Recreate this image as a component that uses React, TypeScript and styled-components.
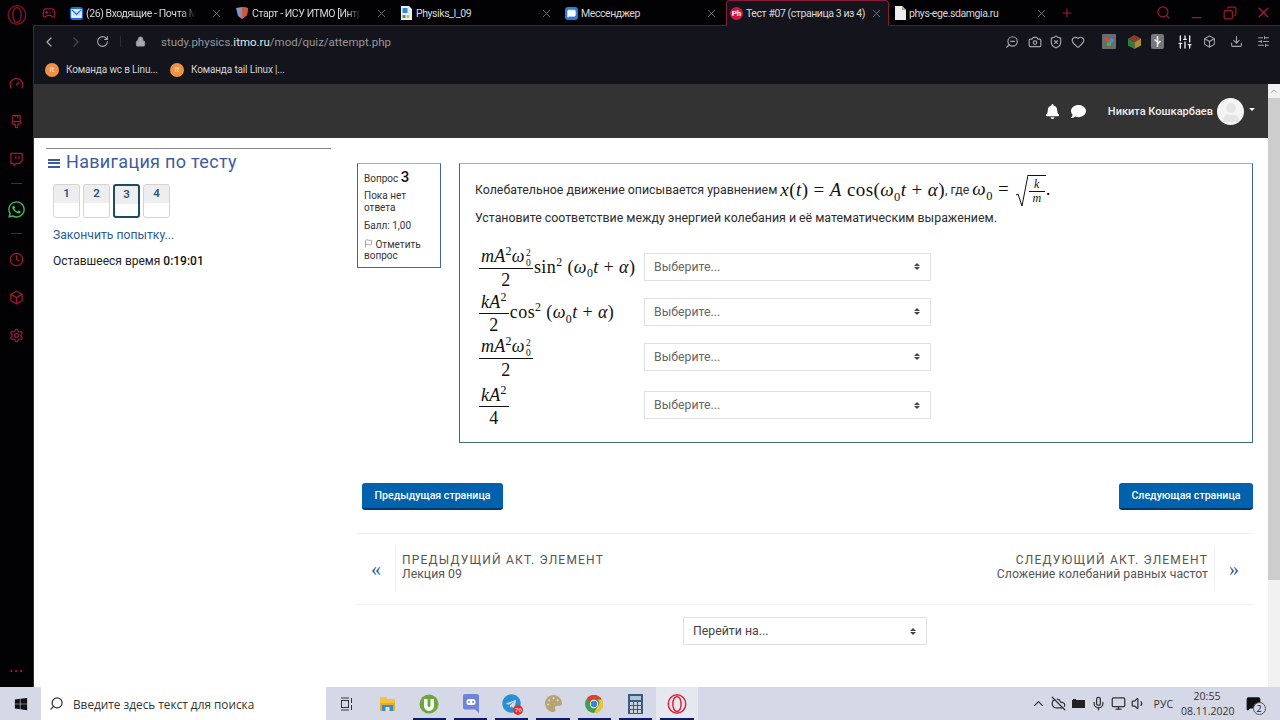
import React from 'react'
import styled, { createGlobalStyle } from 'styled-components'
import {
  Box, Camera, ChevronLeft, ChevronRight, ChevronUp, Clock, CloudOff, Copy, Download, Flag, Gamepad2, Gauge, Heart,
  Lock, Mic, Minus, Monitor, PaintbrushVertical, Plus, RotateCw, Search, Settings, ShieldX, SlidersHorizontal,
  SlidersVertical, Twitch, Volume1, X, ZoomOut, MessageSquare, User,
} from 'lucide-react'
import { FaBell, FaComment, FaTelegram, FaWhatsapp, FaWindows, FaPalette } from 'react-icons/fa'

const GlobalStyle = createGlobalStyle`
    html, body {
        margin: 0;
        padding: 0;
        background: #000;
        overflow: hidden;
    }
    * {
        box-sizing: border-box;
    }
`

const RED = '#a3173a'
const PAGE_FONT = `Roboto, "Noto Sans", sans-serif`
const CHROME_FONT = `Roboto, "Noto Sans", sans-serif`
const TASK_FONT = `"Open Sans", "Noto Sans", sans-serif`
const MATH_FONT = `"Liberation Serif", "DejaVu Serif", serif`

const Screen = styled.div`
    width: 1280px;
    height: 720px;
    display: flex;
    flex-direction: column;
    overflow: hidden;
`
const Desktop = styled.div`
    flex: 1;
    min-height: 0;
    display: flex;
    background: #020204;
`
const Rail = styled.nav`
    width: 33px;
    display: flex;
    flex-direction: column;
    align-items: center;
    color: ${RED};
    padding-bottom: 16px;
`
const RailLogo = styled.div`
    height: 30px;
    margin-bottom: 34px;
    display: flex;
    align-items: center;
    justify-content: center;
`
const RailSlot = styled.div`
    height: 38px;
    display: flex;
    align-items: center;
    justify-content: center;
`
const RailDash = styled.div`
    width: 11px;
    height: 1px;
    margin: 5px 0 6px;
    background: #7a1330;
`
const RailDots = styled.div`
    margin-top: auto;
    color: #d0143f;
    font: bold 13px/6px ${CHROME_FONT};
    letter-spacing: 1px;
`
const Browser = styled.div`
    flex: 1;
    min-width: 0;
    display: flex;
    flex-direction: column;
`
const TabStrip = styled.div`
    height: 26px;
    display: flex;
    align-items: stretch;
    color: #ddd;
    font: 10.5px/25px ${CHROME_FONT};
    letter-spacing: -0.42px;
    border-bottom: 1px solid #6e1129;
`
const PinnedSlot = styled.div`
    width: 31px;
    display: flex;
    align-items: center;
    justify-content: center;
    color: ${RED};
`
const Tab = styled.div<{ $active?: boolean }>`
    width: ${p => (p.$active ? '163px' : '165px')};
    margin-left: ${p => (p.$active ? '2px' : '0')};
    flex: none;
    display: flex;
    align-items: center;
    padding: 0 5px 0 ${p => (p.$active ? '3px' : '5px')};
    gap: 3px;
    height: 26px;
    background: ${p => (p.$active ? '#14151c' : 'transparent')};
    border: 1px solid ${p => (p.$active ? '#8a1a36' : 'transparent')};
    border-bottom: 1px solid ${p => (p.$active ? '#14151c' : 'transparent')};
    border-radius: ${p => (p.$active ? '4px 4px 0 0' : '0')};
`
const TabTitle = styled.span<{ $fade?: boolean }>`
    flex: 1;
    min-width: 0;
    white-space: nowrap;
    color: #d8d8d8;
    ${p => p.$fade && 'mask-image: linear-gradient(to right, #000 82%, transparent 94%);'}
`
const TabClose = styled(X)`
    flex: none;
    width: 13px;
    height: 13px;
    margin-left: 4px;
    color: #8b8b8b;
    stroke-width: 1.4;
`
const Favicon = styled.span<{ $bg: string; $round?: boolean }>`
    flex: none;
    width: 13px;
    height: 13px;
    display: inline-flex;
    align-items: center;
    justify-content: center;
    background: ${p => p.$bg};
    border-radius: ${p => (p.$round ? '50%' : '3px')};
    color: #fff;
    letter-spacing: 0;
    font: bold 8px/13px ${CHROME_FONT};
`
const NewTab = styled.div`
    width: 26px;
    display: flex;
    align-items: center;
    justify-content: center;
    color: ${RED};
`
const WindowButtons = styled.div`
    margin-left: auto;
    display: flex;
    align-items: center;
    color: ${RED};
    gap: 18.5px;
    padding-right: 8px;
`
const MinimizeIcon = styled(Minus)`
    margin-top: 9px;
`
const RestoreIcon = styled(Copy)`
    transform: scaleX(-1);
`
const WindowBody = styled.div`
    flex: 1;
    min-height: 0;
    display: flex;
    flex-direction: column;
    border-left: 1px solid #6e1129;
`
const Toolbar = styled.div`
    height: 31px;
    display: flex;
    align-items: center;
    background: #14151c;
    color: #9a9a9e;
    padding-left: 1px;
`
const NavButton = styled.div<{ $dim?: boolean }>`
    width: 27px;
    display: flex;
    justify-content: center;
    color: ${p => (p.$dim ? '#44454b' : '#a5a5a8')};
`
const ToolbarDivider = styled.span`
    width: 1px;
    height: 11px;
    margin: 0 14px 0 4px;
    background: #2c2d33;
`
const Url = styled.div`
    margin-left: 15px;
    font: 11.5px ${CHROME_FONT};
    color: #96969a;
    b {
        font-weight: 400;
        color: #e6e6e6;
    }
`
const ToolIcons = styled.div`
    margin-left: auto;
    display: flex;
    align-items: center;
    padding-right: 3px;
    color: #a4a4a8;
`
const ToolIcon = styled.div<{ $w: number; $light?: boolean }>`
    width: ${p => p.$w}px;
    display: flex;
    justify-content: center;
    color: ${p => (p.$light ? '#eee' : 'inherit')};
`
const MirroredZoom = styled(ZoomOut)`
    transform: scaleX(-1);
`
const Bookmarks = styled.div`
    height: 27px;
    display: flex;
    align-items: center;
    background: #14151c;
    padding: 0 0 2px 11px;
    font: 10px ${CHROME_FONT};
    letter-spacing: -0.15px;
    color: #d4d4d4;
`
const Bookmark = styled.div<{ $w: number }>`
    width: ${p => p.$w}px;
    display: flex;
    align-items: center;
    gap: 7px;
    white-space: nowrap;
`
const Lt = styled.span`
    width: 14px;
    height: 14px;
    border-radius: 50%;
    background: #ef9145;
    color: #fde7d3;
    font: 8px/14px ${CHROME_FONT};
    text-align: center;
`
const Viewport = styled.div`
    flex: 1;
    min-height: 0;
    display: flex;
    background: #fff;
`
const Page = styled.div`
    flex: 1;
    min-width: 0;
    display: flex;
    flex-direction: column;
    font-family: ${PAGE_FONT};
`
const Header = styled.header`
    height: 54px;
    background: #333;
    display: flex;
    align-items: center;
    justify-content: flex-end;
    padding-right: 13.5px;
    color: #fff;
`
const HeaderIcon = styled.div`
    display: flex;
    margin-right: 11px;
`
const UserName = styled.span`
    margin-left: 10.5px;
    font-size: 11px;
    font-weight: 500;
    color: #eee;
`
const Avatar = styled.span`
    width: 27px;
    height: 27px;
    margin: 0 4.5px 0 4px;
    border-radius: 50%;
    background: #f4f4f4;
    color: #e4e4e4;
    display: flex;
    align-items: flex-end;
    justify-content: center;
    overflow: hidden;
`
const Caret = styled.span`
    width: 0;
    height: 0;
    margin-top: -3px;
    border-left: 3.5px solid transparent;
    border-right: 3.5px solid transparent;
    border-top: 3.5px solid #fff;
`
const Columns = styled.div`
    flex: 1;
    display: flex;
    min-height: 0;
`
const Sidebar = styled.aside`
    width: 323px;
    flex: none;
    padding: 10px 26px 0 12px;
`
const SideCard = styled.div`
    border-top: 1px solid #8a8a8a;
    padding: 3px 0 0 2px;
`
const SideTitle = styled.h2`
    margin: 0;
    display: flex;
    align-items: center;
    gap: 6px;
    font-size: 18px;
    font-weight: 400;
    letter-spacing: 0.3px;
    line-height: 20px;
    color: #3f5a9f;
`
const SideBurger = styled.span`
    width: 12px;
    height: 9px;
    margin-top: 2px;
    border-top: 2px solid #3f5a9f;
    border-bottom: 2px solid #3f5a9f;
    position: relative;
    &::after {
        content: '';
        position: absolute;
        left: 0;
        right: 0;
        top: 1.5px;
        height: 2px;
        background: #3f5a9f;
    }
`
const QuestionLinks = styled.div`
    display: flex;
    gap: 3px;
    margin: 12px 0 0 5px;
`
const QuestionLink = styled.div<{ $current?: boolean }>`
    width: 27px;
    height: 34px;
    background: linear-gradient(to bottom, #eee 0, #eee 18px, #fff 18px);
    border: ${p => (p.$current ? '2px solid #1d4a64' : '1px solid #d4d4d4')};
    border-radius: 3px;
    font-size: 11.5px;
    font-weight: 600;
    line-height: ${p => (p.$current ? '16px' : '17px')};
    text-align: center;
    color: #2c5288;
`
const FinishLink = styled.div`
    margin: 9px 0 0 5px;
    font-size: 12.2px;
    line-height: 16px;
    color: #2f5b92;
`
const TimeLeft = styled.div`
    margin: 10px 0 0 5px;
    font-size: 12px;
    line-height: 16px;
    color: #222;
    b {
        font-weight: 500;
        color: #111;
    }
`
const Main = styled.main`
    flex: 1;
    min-width: 0;
    padding: 25px 15px 0 0;
`
const QuestionRow = styled.div`
    display: flex;
    align-items: flex-start;
    gap: 18px;
`
const InfoBox = styled.div`
    width: 84px;
    height: 105px;
    flex: none;
    padding: 5px 6px;
    border: 1px solid #3d6a8c;
    font-size: 10px;
    line-height: 11.5px;
    color: #333;
    border-top-color: #9db0cd;
    p {
        margin: 0 0 7px;
    }
`
const QuestionNo = styled.p`
    line-height: 16px;
    && {
        margin-bottom: 3px;
    }
    b {
        font-size: 15px;
        font-weight: 500;
        color: #111;
    }
`
const QuestionBox = styled.section`
    flex: 1;
    height: 280px;
    padding: 13px 15px 0;
    border: 1px solid #3d6a8c;
    border-top-color: #9db0cd;
    font-size: 12.35px;
    color: #2c2c2c;
`
const FirstLine = styled.div`
    height: 26px;
    display: flex;
    align-items: center;
    white-space: pre;
`
const SecondLine = styled.div`
    margin-top: 7px;
    height: 16px;
    line-height: 16px;
`
const Answers = styled.div`
    margin-top: 18px;
`
const AnswerRow = styled.div<{ $h: number }>`
    height: ${p => p.$h}px;
    display: flex;
    align-items: center;
`
const AnswerMath = styled.div`
    width: 169px;
    flex: none;
    padding: 4px 0 0 3px;
`
const Formula = styled.span<{ $size?: number }>`
    display: inline-block;
    white-space: pre;
    font-family: ${MATH_FONT};
    font-size: ${p => p.$size ?? 18}px;
    line-height: 24px;
    letter-spacing: 0.4px;
    color: #111;
    i {
        font-style: italic;
    }
    sup, sub {
        font-size: 0.66em;
        line-height: 0;
    }
`
const Frac = styled.span`
    display: inline-flex;
    flex-direction: column;
    align-items: stretch;
    text-align: center;
    vertical-align: middle;
    margin: 0 1px;
`
const Num = styled.span`
    line-height: 21px;
    padding: 0 2px;
    white-space: pre;
    letter-spacing: 0.3px;
    border-bottom: 1px solid #111;
`
const Den = styled.span`
    line-height: 22px;
`
const StackBox = styled.span`
    display: inline-flex;
    flex-direction: column;
    margin-left: 1px;
    font-size: 9.5px;
    line-height: 10px;
    vertical-align: middle;
`
const SmallFrac = styled(Frac)`
    font-size: 12px;
`
const SmallNum = styled.span`
    line-height: 13px;
    padding: 0 5px;
    border-bottom: 1px solid #111;
`
const SmallDen = styled.span`
    line-height: 13px;
`
const Radical = styled.span`
    display: inline-flex;
    align-items: stretch;
    vertical-align: middle;
    margin-left: 6px;
    height: 33px;
`
const RadicalBody = styled.span`
    display: flex;
    align-items: center;
    border-top: 1px solid #111;
    margin-top: 1px;
`
const SelectBox = styled.div<{ $w: number; $dark?: boolean }>`
    width: ${p => p.$w}px;
    height: 28px;
    display: flex;
    align-items: center;
    justify-content: space-between;
    padding: 0 10px 0 9px;
    border: 1px solid #e0e0e0;
    background: #fff;
    font-size: 12.3px;
    color: ${p => (p.$dark ? '#444' : '#666')};
`
const SelectArrows = styled.span`
    display: inline-flex;
    flex-direction: column;
    gap: 1px;
    &::before, &::after {
        content: '';
        width: 0;
        height: 0;
        border-left: 3px solid transparent;
        border-right: 3px solid transparent;
    }
    &::before {
        border-bottom: 3.5px solid #444;
    }
    &::after {
        border-top: 3.5px solid #444;
    }
`
const PageButtons = styled.div`
    display: flex;
    justify-content: space-between;
    margin-top: 40px;
    padding-left: 5px;
`
const PageButton = styled.div`
    height: 27px;
    padding: 0 12.5px;
    display: flex;
    align-items: center;
    background: #0062ac;
    border-bottom: 2px solid #00386e;
    border-radius: 3px;
    color: #fff;
    font-size: 10.6px;
    font-weight: 500;
`
const ActivityNav = styled.div`
    margin-top: 23px;
    height: 72px;
    display: flex;
    align-items: center;
    justify-content: space-between;
    border-top: 1px solid #eee;
    border-bottom: 1px solid #eee;
`
const ActivityLink = styled.div<{ $next?: boolean }>`
    display: flex;
    align-items: center;
    flex-direction: ${p => (p.$next ? 'row-reverse' : 'row')};
    text-align: ${p => (p.$next ? 'right' : 'left')};
`
const ActivityArrow = styled.div`
    width: 38px;
    text-align: center;
    font: 20px/20px ${MATH_FONT};
    color: #2d5a96;
`
const ActivityText = styled.div<{ $next?: boolean }>`
    height: 44px;
    padding-bottom: 4px;
    display: flex;
    flex-direction: column;
    justify-content: center;
    ${p => (p.$next ? 'border-right' : 'border-left')}: 1px solid #f0f0f0;
    ${p => (p.$next ? 'padding-right' : 'padding-left')}: 6px;
`
const ActivityLabel = styled.div`
    font-size: 12px;
    line-height: 14px;
    letter-spacing: 1.2px;
    color: #555;
`
const ActivityName = styled.div`
    font-size: 12.3px;
    line-height: 14px;
    color: #555;
`
const JumpRow = styled.div`
    display: flex;
    justify-content: center;
    margin-top: 12px;
`
const Scrollbar = styled.div`
    width: 12px;
    flex: none;
    display: flex;
    flex-direction: column;
    align-items: center;
    background: #f1f1f1;
    color: #a0a0a0;
`
const ScrollUp = styled(ChevronUp)`
    margin-top: 2px;
`
const ScrollThumb = styled.div`
    width: 12px;
    height: 482px;
    margin-top: 2px;
    background: #cdcdcd;
`
const Taskbar = styled.footer`
    height: 33px;
    flex: none;
    display: flex;
    align-items: stretch;
    background: #d5d8e6;
    color: #222;
`
const StartButton = styled.div`
    width: 41px;
    display: flex;
    align-items: center;
    justify-content: center;
    color: #111;
`
const TaskSearch = styled.div`
    width: 285px;
    display: flex;
    align-items: center;
    gap: 9px;
    padding-left: 8px;
    background: #fff;
    font: 11.8px ${TASK_FONT};
    color: #333;
`
const MirroredSearch = styled(Search)`
    transform: scaleX(-1);
`
const TaskIcons = styled.div`
    display: flex;
`
const TaskSlot = styled.div<{ $running?: boolean; $active?: boolean }>`
    width: 41.3px;
    display: flex;
    align-items: center;
    justify-content: center;
    position: relative;
    background: ${p => (p.$active ? '#e6e8f0' : 'transparent')};
    &::after {
        content: '';
        position: absolute;
        left: 4px;
        right: 4px;
        bottom: 0;
        height: 2px;
        background: ${p => (p.$running ? '#0d1a66' : 'transparent')};
    }
`
const TelegramBadge = styled.span`
    position: absolute;
    right: 9px;
    bottom: 5px;
    width: 10px;
    height: 10px;
    border-radius: 50%;
    background: #d9352f;
    color: #fff;
    font: 6px/10px ${TASK_FONT};
    text-align: center;
`
const Tray = styled.div`
    margin-left: auto;
    display: flex;
    align-items: center;
    padding-right: 9.5px;
    color: #333;
`
const TrayIcon = styled.div`
    width: 20px;
    display: flex;
    justify-content: center;
`
const TrayLang = styled.span`
    margin-left: 5px;
    font: 10.5px ${TASK_FONT};
    color: #333;
`
const TrayClock = styled.div`
    margin-left: 8px;
    width: 52px;
    text-align: center;
    font: 10.5px/15px ${TASK_FONT};
    color: #333;
`
const NoticeButton = styled.div`
    width: 35px;
    margin-left: 2.5px;
    display: flex;
    justify-content: center;
    position: relative;
    color: #111;
`
const NoticeBadge = styled.span`
    position: absolute;
    left: 17px;
    top: 6px;
    width: 13px;
    height: 13px;
    border-radius: 50%;
    background: #d5d8e6;
    border: 1px solid #555;
    font: 9px/11px ${TASK_FONT};
    text-align: center;
`

const OperaRing: React.FC<{ size: number; color: string }> = ({ size, color }) => (
  <svg width={size} height={size} viewBox="0 0 24 24" fill="none" stroke={color} strokeWidth="1.8">
    <ellipse cx="12" cy="12" rx="10.5" ry="11" />
    <ellipse cx="12" cy="12" rx="5" ry="9" />
  </svg>
)

const MailIcon = () => (
  <Favicon $bg="#1c6fd6">
    <svg width="11" height="11" viewBox="0 0 12 12" fill="none" stroke="#fff" strokeWidth="1.4">
      <rect x="1" y="2" width="10" height="8" fill="#cfe2fb" />
      <path d="M1 2l5 5 5-5" stroke="#1c6fd6" />
    </svg>
  </Favicon>
)

const ShieldIcon = () => (
  <svg width="14" height="14" viewBox="0 0 14 14">
    <path d="M1 2l6-1 6 1-1 7-5 4-4-3z" fill="#7f93c4" />
    <path d="M7 1l6 1-1 7-5 4z" fill="#d2573c" />
  </svg>
)

const DocIcon = () => (
  <svg width="13" height="14" viewBox="0 0 13 14">
    <path d="M1 0h8l3 3v11H1z" fill="#e9f2fb" />
    <rect x="2.5" y="2" width="5" height="5" fill="#2a8ad4" />
    <rect x="2.5" y="9" width="3" height="3" fill="#3fa14a" />
    <rect x="6.5" y="9" width="3" height="3" fill="#e8b93a" />
  </svg>
)

const PageIcon = () => (
  <svg width="11" height="14" viewBox="0 0 11 14">
    <path d="M0 0h7l4 4v10H0z" fill="#eee" />
    <path d="M7 0l4 4H7z" fill="#aaa" />
  </svg>
)

const ColorExtension = () => (
  <svg width="14" height="15" viewBox="0 0 14 15">
    <rect width="14" height="15" rx="1" fill="#6b6b6b" />
    <circle cx="5" cy="6" r="2.2" fill="#d84a3a" />
    <circle cx="9.5" cy="6.5" r="2.2" fill="#3f8ed8" />
    <circle cx="7" cy="10" r="2.2" fill="#4fb04f" />
  </svg>
)

const CubeExtension = () => (
  <svg width="13" height="14" viewBox="0 0 13 14">
    <path d="M6.5 0l6.5 3.5-6.5 3.5L0 3.5z" fill="#8a3b2c" />
    <path d="M0 3.5L6.5 7v7L0 10.5z" fill="#2f7a45" />
    <path d="M13 3.5L6.5 7v7l6.5-3.5z" fill="#a98c2f" />
  </svg>
)

const UsbExtension = () => (
  <svg width="13" height="15" viewBox="0 0 13 15">
    <rect width="13" height="15" rx="2" fill="#77777b" />
    <path d="M6.5 2v11M6.5 8L3.5 5.5M6.5 10l3-3" stroke="#eee" strokeWidth="1.5" fill="none" />
  </svg>
)

const TaskViewIcon = () => (
  <svg width="14" height="14" viewBox="0 0 14 14" fill="none" stroke="#333">
    <rect x="1.5" y="3.5" width="7" height="7" />
    <path d="M1 1h8M1 13h8M11.5 1v5M11.5 8v5" />
  </svg>
)

const ExplorerIcon = () => (
  <svg width="17" height="17" viewBox="0 0 17 17">
    <path d="M1 2h6l1.5 2H16v4H1z" fill="#f3c33f" />
    <rect x="1" y="8" width="15" height="8" fill="#e9a92c" />
    <rect x="3" y="10" width="11" height="6" fill="#2f8fd6" />
    <rect x="6.5" y="12" width="4" height="4" fill="#f4e2a8" />
  </svg>
)

const TorrentIcon = () => (
  <svg width="20" height="20" viewBox="0 0 20 20">
    <circle cx="10" cy="10" r="9.5" fill="#6ea83c" />
    <path d="M5 5h3.5v7a1.6 1.6 0 003 0V5H15v7a5 5 0 01-10 0z" fill="#fff" />
  </svg>
)

const DiscordIcon = () => (
  <svg width="16" height="19" viewBox="0 0 16 19">
    <path d="M2 0h12a2 2 0 012 2v17l-4-3.5H2a2 2 0 01-2-2V2a2 2 0 012-2z" fill="#6f84d6" />
    <rect x="3.5" y="5" width="9" height="6" rx="2.5" fill="#fff" />
    <circle cx="6" cy="8" r="1" fill="#6f84d6" />
    <circle cx="10" cy="8" r="1" fill="#6f84d6" />
  </svg>
)

const ChromeIcon = () => (
  <svg width="18" height="18" viewBox="0 0 18 18">
    <circle cx="9" cy="9" r="9" fill="#3fa14a" />
    <path d="M9 0a9 9 0 017.8 4.5H9a4.5 4.5 0 00-4.2 3L2 3.2A9 9 0 019 0z" fill="#d9432f" />
    <path d="M16.8 4.5A9 9 0 019 18l3.6-6.5a4.5 4.5 0 00.3-7z" fill="#f2c230" />
    <circle cx="9" cy="9" r="4.2" fill="#fff" />
    <circle cx="9" cy="9" r="3.2" fill="#3f7fe0" />
  </svg>
)

const CalculatorIcon = () => (
  <svg width="15" height="20" viewBox="0 0 15 20">
    <rect width="15" height="20" fill="#3d5a78" />
    <rect x="2" y="2" width="11" height="4" fill="#a9c4dc" />
    <path d="M2 8h3v3H2zM6 8h3v3H6zM10 8h3v3h-3zM2 12h3v3H2zM6 12h3v3H6zM10 12h3v3h-3zM2 16h3v3H2zM6 16h3v3H6zM10 16h3v3h-3z" fill="#c8d2dc" />
  </svg>
)

const Select: React.FC<{ text: string; width: number; dark?: boolean }> = ({ text, width, dark }) => (
  <SelectBox $w={width} $dark={dark}>
    {text}
    <SelectArrows />
  </SelectBox>
)

const MassFrac = () => (
  <Frac>
    <Num>
      <i>mA</i><sup>2</sup><i>ω</i>
      <StackBox>
        <span>2</span>
        <span>0</span>
      </StackBox>
    </Num>
    <Den>2</Den>
  </Frac>
)

const KFrac: React.FC<{ den: string }> = ({ den }) => (
  <Frac>
    <Num><i>kA</i><sup>2</sup></Num>
    <Den>{den}</Den>
  </Frac>
)

const Omega = () => <><i>ω</i><sub>0</sub></>

const App: React.FC = () => {
  return (
    <Screen>
      <GlobalStyle />
      <Desktop>
        <Rail>
          <RailLogo><OperaRing size={20} color="#7d1129" /></RailLogo>
          <RailSlot><Gauge size={15} /></RailSlot>
          <RailSlot><PaintbrushVertical size={15} /></RailSlot>
          <RailSlot><Twitch size={15} /></RailSlot>
          <RailDash />
          <RailSlot><FaWhatsapp size={19} color="#3fbf5c" /></RailSlot>
          <RailDash />
          <RailSlot><Clock size={15} /></RailSlot>
          <RailSlot><Box size={15} /></RailSlot>
          <RailSlot><Settings size={15} /></RailSlot>
          <RailDots>...</RailDots>
        </Rail>
        <Browser>
          <TabStrip>
            <PinnedSlot><Gamepad2 size={14} /></PinnedSlot>
            <Tab>
              <MailIcon />
              <TabTitle $fade>(26) Входящие - Почта Ма</TabTitle>
              <TabClose />
            </Tab>
            <Tab>
              <ShieldIcon />
              <TabTitle $fade>Старт - ИСУ ИТМО [Интра</TabTitle>
              <TabClose />
            </Tab>
            <Tab>
              <DocIcon />
              <TabTitle>Physiks_I_09</TabTitle>
              <TabClose />
            </Tab>
            <Tab>
              <Favicon $bg="#2a7be0"><MessageSquare size={9} fill="#fff" /></Favicon>
              <TabTitle>Мессенджер</TabTitle>
              <TabClose />
            </Tab>
            <Tab $active>
              <Favicon $bg="#d8123f" $round>Ph</Favicon>
              <TabTitle>Тест #07 (страница 3 из 4)</TabTitle>
              <TabClose />
            </Tab>
            <Tab>
              <PageIcon />
              <TabTitle>phys-ege.sdamgia.ru</TabTitle>
              <TabClose />
            </Tab>
            <NewTab><Plus size={14} /></NewTab>
            <WindowButtons>
              <Search size={15} />
              <MinimizeIcon size={15} />
              <RestoreIcon size={14} />
              <X size={17} />
            </WindowButtons>
          </TabStrip>
          <WindowBody>
            <Toolbar>
              <NavButton><ChevronLeft size={16} /></NavButton>
              <NavButton $dim><ChevronRight size={16} /></NavButton>
              <NavButton><RotateCw size={13} /></NavButton>
              <ToolbarDivider />
              <Lock size={11} fill="#aaa" />
              <Url>study.physics.<b>itmo.ru</b>/mod/quiz/attempt.php</Url>
              <ToolIcons>
                <ToolIcon $w={23}><MirroredZoom size={14} /></ToolIcon>
                <ToolIcon $w={23}><Camera size={14} /></ToolIcon>
                <ToolIcon $w={19}><ShieldX size={14} /></ToolIcon>
                <ToolIcon $w={25}><Heart size={14} /></ToolIcon>
                <ToolIcon $w={37}><ColorExtension /></ToolIcon>
                <ToolIcon $w={15}><CubeExtension /></ToolIcon>
                <ToolIcon $w={31}><UsbExtension /></ToolIcon>
                <ToolIcon $w={23} $light><SlidersVertical size={16} /></ToolIcon>
                <ToolIcon $w={27}><Box size={13} /></ToolIcon>
                <ToolIcon $w={27}><Download size={13} /></ToolIcon>
                <ToolIcon $w={27}><SlidersHorizontal size={13} /></ToolIcon>
              </ToolIcons>
            </Toolbar>
            <Bookmarks>
              <Bookmark $w={125}><Lt>lt</Lt>Команда wc в Linu...</Bookmark>
              <Bookmark $w={130}><Lt>lt</Lt>Команда tail Linux |...</Bookmark>
            </Bookmarks>
            <Viewport>
              <Page>
                <Header>
                  <HeaderIcon><FaBell size={15} /></HeaderIcon>
                  <HeaderIcon><FaComment size={15} /></HeaderIcon>
                  <UserName>Никита Кошкарбаев</UserName>
                  <Avatar><User size={24} fill="#e4e4e4" /></Avatar>
                  <Caret />
                </Header>
                <Columns>
                  <Sidebar>
                    <SideCard>
                      <SideTitle><SideBurger />Навигация по тесту</SideTitle>
                      <QuestionLinks>
                        <QuestionLink>1</QuestionLink>
                        <QuestionLink>2</QuestionLink>
                        <QuestionLink $current>3</QuestionLink>
                        <QuestionLink>4</QuestionLink>
                      </QuestionLinks>
                      <FinishLink>Закончить попытку...</FinishLink>
                      <TimeLeft>Оставшееся время <b>0:19:01</b></TimeLeft>
                    </SideCard>
                  </Sidebar>
                  <Main>
                    <QuestionRow>
                      <InfoBox>
                        <QuestionNo>Вопрос <b>3</b></QuestionNo>
                        <p>Пока нет ответа</p>
                        <p>Балл: 1,00</p>
                        <p><Flag size={9} color="#888" /> Отметить вопрос</p>
                      </InfoBox>
                      <QuestionBox>
                        <FirstLine>
                          Колебательное движение описывается уравнением{' '}
                          <Formula $size={19}><i>x</i>(<i>t</i>) = <i>A</i> cos(<Omega /><i>t</i> + <i>α</i>)</Formula>
                          , где{' '}
                          <Formula $size={19}>
                            <Omega /> =
                            <Radical>
                              <svg width="13" height="33" viewBox="0 0 13 33" fill="none" stroke="#111">
                                <path d="M1 21l2-1 4 12 6-31" />
                              </svg>
                              <RadicalBody>
                                <SmallFrac>
                                  <SmallNum><i>k</i></SmallNum>
                                  <SmallDen><i>m</i></SmallDen>
                                </SmallFrac>
                              </RadicalBody>
                            </Radical>
                            .
                          </Formula>
                        </FirstLine>
                        <SecondLine>Установите соответствие между энергией колебания и её математическим выражением.</SecondLine>
                        <Answers>
                          <AnswerRow $h={45}>
                            <AnswerMath><Formula><MassFrac />sin<sup>2</sup> (<Omega /><i>t</i> + <i>α</i>)</Formula></AnswerMath>
                            <Select text="Выберите..." width={287} />
                          </AnswerRow>
                          <AnswerRow $h={45}>
                            <AnswerMath><Formula><KFrac den="2" />cos<sup>2</sup> (<Omega /><i>t</i> + <i>α</i>)</Formula></AnswerMath>
                            <Select text="Выберите..." width={287} />
                          </AnswerRow>
                          <AnswerRow $h={45}>
                            <AnswerMath><Formula><MassFrac /></Formula></AnswerMath>
                            <Select text="Выберите..." width={287} />
                          </AnswerRow>
                          <AnswerRow $h={52}>
                            <AnswerMath><Formula><KFrac den="4" /></Formula></AnswerMath>
                            <Select text="Выберите..." width={287} />
                          </AnswerRow>
                        </Answers>
                      </QuestionBox>
                    </QuestionRow>
                    <PageButtons>
                      <PageButton>Предыдущая страница</PageButton>
                      <PageButton>Следующая страница</PageButton>
                    </PageButtons>
                    <ActivityNav>
                      <ActivityLink>
                        <ActivityArrow>«</ActivityArrow>
                        <ActivityText>
                          <ActivityLabel>ПРЕДЫДУЩИЙ АКТ. ЭЛЕМЕНТ</ActivityLabel>
                          <ActivityName>Лекция 09</ActivityName>
                        </ActivityText>
                      </ActivityLink>
                      <ActivityLink $next>
                        <ActivityArrow>»</ActivityArrow>
                        <ActivityText $next>
                          <ActivityLabel>СЛЕДУЮЩИЙ АКТ. ЭЛЕМЕНТ</ActivityLabel>
                          <ActivityName>Сложение колебаний равных частот</ActivityName>
                        </ActivityText>
                      </ActivityLink>
                    </ActivityNav>
                    <JumpRow><Select text="Перейти на..." width={244} dark /></JumpRow>
                  </Main>
                </Columns>
              </Page>
              <Scrollbar>
                <ScrollUp size={10} />
                <ScrollThumb />
              </Scrollbar>
            </Viewport>
          </WindowBody>
        </Browser>
      </Desktop>
      <Taskbar>
        <StartButton><FaWindows size={14} /></StartButton>
        <TaskSearch>
          <MirroredSearch size={15} />
          Введите здесь текст для поиска
        </TaskSearch>
        <TaskIcons>
          <TaskSlot><TaskViewIcon /></TaskSlot>
          <TaskSlot><ExplorerIcon /></TaskSlot>
          <TaskSlot $running><TorrentIcon /></TaskSlot>
          <TaskSlot $running><DiscordIcon /></TaskSlot>
          <TaskSlot $running>
            <FaTelegram size={19} color="#2a8fd1" />
            <TelegramBadge>76</TelegramBadge>
          </TaskSlot>
          <TaskSlot $running><FaPalette size={17} color="#b9a36e" /></TaskSlot>
          <TaskSlot $running><ChromeIcon /></TaskSlot>
          <TaskSlot $running><CalculatorIcon /></TaskSlot>
          <TaskSlot $running $active><OperaRing size={20} color="#d8263f" /></TaskSlot>
        </TaskIcons>
        <Tray>
          <TrayIcon><ChevronUp size={15} /></TrayIcon>
          <TrayIcon><CloudOff size={15} /></TrayIcon>
          <TrayIcon><svg width="14" height="9" viewBox="0 0 14 9"><rect x="0" y="1" width="13" height="8" fill="#222" /><rect x="1" y="0" width="3" height="1" fill="#222" /></svg></TrayIcon>
          <TrayIcon><Mic size={15} /></TrayIcon>
          <TrayIcon><Monitor size={15} /></TrayIcon>
          <TrayIcon><Volume1 size={15} /></TrayIcon>
          <TrayLang>РУС</TrayLang>
          <TrayClock>20:55<br />08.11.2020</TrayClock>
          <NoticeButton>
            <MessageSquare size={15} fill="#111" />
            <NoticeBadge>2</NoticeBadge>
          </NoticeButton>
        </Tray>
      </Taskbar>
    </Screen>
  )
}

export default App
